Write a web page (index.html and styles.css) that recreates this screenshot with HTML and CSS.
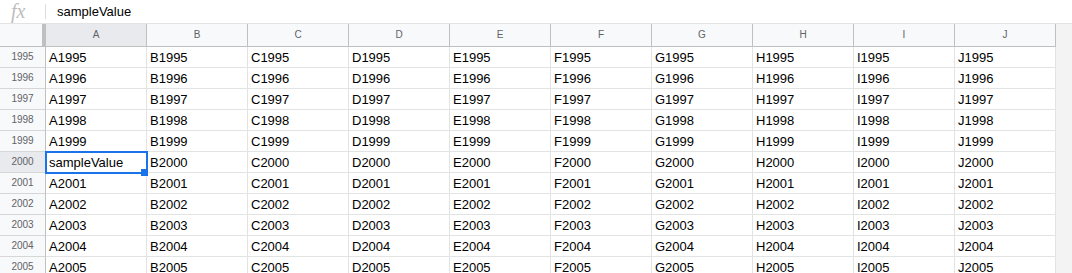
FILE: index.html
```html
<!DOCTYPE html>
<html>
<head>
<meta charset="utf-8">
<link rel="stylesheet" href="styles.css">
</head>
<body>
<div class="formula-bar">
  <span class="fx">fx</span>
  <span class="sep"></span>
  <span class="formula">sampleValue</span>
</div>
<div class="sheet">
  <div class="grid" id="grid">
    <div class="corner"></div>
    <div class="col-head sel">A</div>
    <div class="col-head">B</div>
    <div class="col-head">C</div>
    <div class="col-head">D</div>
    <div class="col-head">E</div>
    <div class="col-head">F</div>
    <div class="col-head">G</div>
    <div class="col-head">H</div>
    <div class="col-head">I</div>
    <div class="col-head">J</div>

    <div class="row-head">1995</div><div class="cell">A1995</div><div class="cell">B1995</div><div class="cell">C1995</div><div class="cell">D1995</div><div class="cell">E1995</div><div class="cell">F1995</div><div class="cell">G1995</div><div class="cell">H1995</div><div class="cell">I1995</div><div class="cell">J1995</div>
    <div class="row-head">1996</div><div class="cell">A1996</div><div class="cell">B1996</div><div class="cell">C1996</div><div class="cell">D1996</div><div class="cell">E1996</div><div class="cell">F1996</div><div class="cell">G1996</div><div class="cell">H1996</div><div class="cell">I1996</div><div class="cell">J1996</div>
    <div class="row-head">1997</div><div class="cell">A1997</div><div class="cell">B1997</div><div class="cell">C1997</div><div class="cell">D1997</div><div class="cell">E1997</div><div class="cell">F1997</div><div class="cell">G1997</div><div class="cell">H1997</div><div class="cell">I1997</div><div class="cell">J1997</div>
    <div class="row-head">1998</div><div class="cell">A1998</div><div class="cell">B1998</div><div class="cell">C1998</div><div class="cell">D1998</div><div class="cell">E1998</div><div class="cell">F1998</div><div class="cell">G1998</div><div class="cell">H1998</div><div class="cell">I1998</div><div class="cell">J1998</div>
    <div class="row-head">1999</div><div class="cell">A1999</div><div class="cell">B1999</div><div class="cell">C1999</div><div class="cell">D1999</div><div class="cell">E1999</div><div class="cell">F1999</div><div class="cell">G1999</div><div class="cell">H1999</div><div class="cell">I1999</div><div class="cell">J1999</div>
    <div class="row-head sel">2000</div><div class="cell active">sampleValue<span class="sel-box"></span><span class="sel-handle"></span></div><div class="cell">B2000</div><div class="cell">C2000</div><div class="cell">D2000</div><div class="cell">E2000</div><div class="cell">F2000</div><div class="cell">G2000</div><div class="cell">H2000</div><div class="cell">I2000</div><div class="cell">J2000</div>
    <div class="row-head">2001</div><div class="cell">A2001</div><div class="cell">B2001</div><div class="cell">C2001</div><div class="cell">D2001</div><div class="cell">E2001</div><div class="cell">F2001</div><div class="cell">G2001</div><div class="cell">H2001</div><div class="cell">I2001</div><div class="cell">J2001</div>
    <div class="row-head">2002</div><div class="cell">A2002</div><div class="cell">B2002</div><div class="cell">C2002</div><div class="cell">D2002</div><div class="cell">E2002</div><div class="cell">F2002</div><div class="cell">G2002</div><div class="cell">H2002</div><div class="cell">I2002</div><div class="cell">J2002</div>
    <div class="row-head">2003</div><div class="cell">A2003</div><div class="cell">B2003</div><div class="cell">C2003</div><div class="cell">D2003</div><div class="cell">E2003</div><div class="cell">F2003</div><div class="cell">G2003</div><div class="cell">H2003</div><div class="cell">I2003</div><div class="cell">J2003</div>
    <div class="row-head">2004</div><div class="cell">A2004</div><div class="cell">B2004</div><div class="cell">C2004</div><div class="cell">D2004</div><div class="cell">E2004</div><div class="cell">F2004</div><div class="cell">G2004</div><div class="cell">H2004</div><div class="cell">I2004</div><div class="cell">J2004</div>
    <div class="row-head">2005</div><div class="cell">A2005</div><div class="cell">B2005</div><div class="cell">C2005</div><div class="cell">D2005</div><div class="cell">E2005</div><div class="cell">F2005</div><div class="cell">G2005</div><div class="cell">H2005</div><div class="cell">I2005</div><div class="cell">J2005</div>
  </div>
  <div class="gutter"></div>
</div>
</body>
</html>
```

FILE: styles.css
```css
html, body {
  margin: 0;
  padding: 0;
  height: 273px;
  overflow: hidden;
  background: #fff;
  font-family: "Liberation Sans", Arial, sans-serif;
}

.formula-bar {
  display: flex;
  align-items: center;
  height: 23px;
  border-bottom: 1px solid #e2e3e3;
  padding-left: 11px;
  background: #fff;
}

.fx {
  width: 34px;
  font-family: "Liberation Serif", serif;
  font-style: italic;
  font-size: 20px;
  line-height: 23px;
  color: #bdbdbd;
}

.sep {
  width: 1px;
  height: 15px;
  background: #dadce0;
  margin-right: 11px;
}

.formula {
  font-size: 13px;
  color: #000;
  line-height: 23px;
}

.sheet {
  display: flex;
  align-items: flex-start;
  height: 249px;
}

.grid {
  display: grid;
  grid-template-columns: 46px repeat(10, 101px);
  grid-template-rows: 23px;
  grid-auto-rows: 21px;
}

.corner {
  box-sizing: border-box;
  background: #f8f9fa;
  border-right: 4px solid #c0c0c0;
  border-bottom: 1px solid #c0c0c0;
}

.col-head {
  box-sizing: border-box;
  background: #f8f9fa;
  border-right: 1px solid #c0c0c0;
  border-bottom: 1px solid #c0c0c0;
  text-align: center;
  font-size: 10px;
  line-height: 22px;
  color: #5f6368;
}

.row-head {
  box-sizing: border-box;
  background: #f8f9fa;
  border-right: 1px solid #c0c0c0;
  border-bottom: 1px solid #d6d6d6;
  text-align: center;
  font-size: 10px;
  line-height: 20px;
  color: #5f6368;
}

.col-head.sel,
.row-head.sel {
  background: #e8eaed;
}

.cell {
  position: relative;
  box-sizing: border-box;
  border-right: 1px solid #e2e3e3;
  border-bottom: 1px solid #e2e3e3;
  padding: 0 3px;
  font-size: 13px;
  line-height: 22px;
  height: 21px;
  color: #000;
  white-space: nowrap;
}

.sel-box {
  position: absolute;
  left: -1px;
  top: -1px;
  width: 103px;
  height: 23px;
  box-sizing: border-box;
  border: 2px solid #1a73e8;
  pointer-events: none;
}

.sel-handle {
  position: absolute;
  left: 95px;
  top: 17px;
  width: 7px;
  height: 7px;
  background: #1a73e8;
  z-index: 2;
}

.gutter {
  flex: 1;
  align-self: stretch;
  background: #f3f3f3;
}
```
